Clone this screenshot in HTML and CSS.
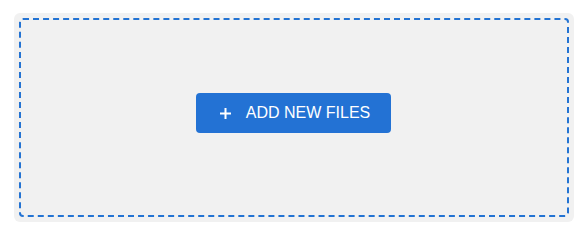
FILE: index.html
```html
<!DOCTYPE html>
<html>
<head>
<meta charset="utf-8">
<link rel="stylesheet" href="styles.css">
</head>
<body>
<div class="uploader">
  <div class="dropzone">
    <button class="add-btn" type="button">
      <svg class="plus" width="11" height="11" viewBox="0 0 11 11"><path d="M5.5 0V11M0 5.5H11" stroke="#fff" stroke-width="2"/></svg>
      <span class="label">ADD NEW FILES</span>
    </button>
  </div>
</div>
</body>
</html>
```
FILE: styles.css
```css
html, body { margin: 0; padding: 0; background: #ffffff; }
body { padding: 13px 8px 0 14px; font-family: "Liberation Sans", Arial, sans-serif; }
.uploader {
  width: 560px;
  height: 209px;
  box-sizing: border-box;
  padding: 5px;
  background: #f1f1f1;
  border-radius: 6px;
}
.dropzone {
  box-sizing: border-box;
  height: 199px;
  border: 2px dashed #2373d3;
  border-radius: 4px;
  display: flex;
  justify-content: center;
  align-items: flex-start;
  padding-top: 73px;
  padding-right: 1px;
}
.add-btn {
  display: flex;
  align-items: center;
  height: 40px;
  box-sizing: border-box;
  padding: 0 21px 0 24px;
  border: none;
  border-radius: 4px;
  background: #2372d4;
  color: #ffffff;
  font-family: "Liberation Sans", Arial, sans-serif;
  font-size: 16px;
  cursor: pointer;
}
.plus { display: block; margin-right: 15px; }
.label { line-height: 18px; }
```
